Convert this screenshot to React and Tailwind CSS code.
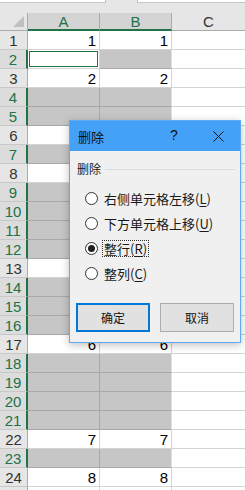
import React from "react";

const SEL = new Set([2, 4, 5, 7, 9, 10, 11, 12, 14, 15, 16, 18, 19, 20, 21, 23]);
const VALS = { 1: 1, 3: 2, 17: 6, 22: 7, 24: 8 };

function Row({ n }) {
  const sel = SEL.has(n);
  const active = n === 2;
  const v = VALS[n];
  const label = n <= 24 ? n : "";
  return (
    <div className="flex h-[19px] shrink-0">
      <div
        className={
          "w-[28px] shrink-0 flex items-center justify-center border-b border-[#c8c8c8] text-[15px] leading-none " +
          (sel
            ? "bg-[#dcdcdc] text-[#217346] border-r-2 border-r-[#217346]"
            : "bg-[#e6e6e6] text-[#333] border-r border-r-[#ababab]")
        }
      >
        {label}
      </div>
      {active ? (
        <div className="w-[72px] shrink-0 border-r border-b border-[#d4d4d4] bg-white p-[1px]">
          <div className="h-full w-full border border-[#217346]"></div>
        </div>
      ) : (
        <div
          className={
            "w-[72px] shrink-0 flex items-center justify-end pr-[3px] border-r border-b text-[15px] leading-none text-black " +
            (sel ? "bg-[#c6c6c6] border-[#a8a8a8]" : "bg-white border-[#d4d4d4]")
          }
        >
          {v}
        </div>
      )}
      <div
        className={
          "w-[72px] shrink-0 flex items-center justify-end pr-[3px] border-r border-b text-[15px] leading-none text-black " +
          (sel ? "bg-[#c6c6c6] border-[#a8a8a8] border-r-[#e0e0e0]" : "bg-white border-[#d4d4d4]")
        }
      >
        {v}
      </div>
      <div className="flex-1 bg-white border-b border-[#d4d4d4]"></div>
    </div>
  );
}

function Radio({ checked }) {
  return (
    <div className="w-[13px] h-[13px] rounded-full border border-[#333] bg-white flex items-center justify-center shrink-0">
      {checked && <div className="w-[7px] h-[7px] rounded-full bg-[#222]"></div>}
    </div>
  );
}

function Option({ label, k, checked }) {
  return (
    <div className="h-[25px] flex items-center pl-[15px] gap-[4px]">
      <Radio checked={checked} />
      <span
        className={
          "text-[13px] leading-none text-[#1a1a1a] px-[1px] py-[1px] " +
          (checked ? "border border-dotted border-[#333]" : "border border-transparent")
        }
      >
        {label}(<span className="underline underline-offset-2">{k}</span>)
      </span>
    </div>
  );
}

export default function App() {
  const rows = Array.from({ length: 25 }, (_, i) => i + 1);
  return (
    <div
      className="relative w-[245px] h-[490px] overflow-hidden bg-white flex flex-col"
      style={{ fontFamily: '"Liberation Sans", "Noto Sans CJK SC", sans-serif' }}
    >
      {/* formula bar remnant */}
      <div className="h-[13px] shrink-0 bg-[#e6e6e6] flex items-start">
        <div className="w-[106px] h-[3px] bg-white border-b border-r border-[#c6c6c6]"></div>
        <div className="flex-1"></div>
        <div className="w-[108px] h-[3px] bg-white border-b border-l border-[#c6c6c6]"></div>
      </div>
      {/* column headers */}
      <div className="flex h-[18px] shrink-0">
        <div className="w-[28px] shrink-0 bg-[#e6e6e6] border-r border-b border-[#ababab] relative">
          <div className="absolute right-[3px] bottom-[3px] w-0 h-0 border-l-[11px] border-l-transparent border-b-[11px] border-b-[#c0c0c0]"></div>
        </div>
        <div className="w-[72px] shrink-0 bg-[#d4d4d4] border-r border-[#ababab] border-b-2 border-b-[#217346] flex items-center justify-center text-[15px] leading-none text-[#217346]">
          A
        </div>
        <div className="w-[72px] shrink-0 bg-[#d4d4d4] border-r border-[#ababab] border-b-2 border-b-[#217346] flex items-center justify-center text-[15px] leading-none text-[#217346]">
          B
        </div>
        <div className="flex-1 bg-[#e6e6e6] border-b border-[#ababab] flex items-center justify-center text-[15px] leading-none text-[#333]">
          C
        </div>
      </div>
      {rows.map((n) => (
        <Row key={n} n={n} />
      ))}

      {/* dialog */}
      <div
        className="absolute left-[69px] top-[120px] w-[172px] h-[223px] border border-[#5fa9f0] bg-[#f0f0f0] shadow-[0_2px_8px_rgba(0,0,0,0.25)] flex flex-col"
        style={{ fontFamily: '"Noto Sans CJK SC", "Liberation Sans", sans-serif' }}
      >
        <div className="h-[30px] shrink-0 bg-[#45a0f7] flex items-center pl-[8px] relative">
          <span className="text-[13px] leading-none text-[#111]">删除</span>
          <span className="absolute left-[100px] top-[7px] text-[14px] leading-none text-[#111]" style={{ fontFamily: '"Liberation Sans", sans-serif' }}>?</span>
          <svg className="absolute left-[143px] top-[10px]" width="11" height="11" viewBox="0 0 11 11">
            <path d="M0.5 0.5 L10.5 10.5 M10.5 0.5 L0.5 10.5" stroke="#111" strokeWidth="1" fill="none" />
          </svg>
        </div>
        <div className="flex flex-col pt-[11px]">
          <div className="h-[14px] flex items-center pl-[7px] pr-[5px] gap-[4px]">
            <span className="text-[12px] leading-none text-[#1a1a1a]">删除</span>
            <div className="flex-1 h-px bg-[#d8dde2]"></div>
          </div>
          <div className="mt-[10px] flex flex-col">
            <Option label="右侧单元格左移" k="L" />
            <Option label="下方单元格上移" k="U" />
            <Option label="整行" k="R" checked />
            <Option label="整列" k="C" />
          </div>
          <div className="mt-[17px] flex gap-[10px] pl-[6px]">
            <div className="w-[74px] h-[29px] bg-[#e1e1e1] border-2 border-[#0078d7] flex items-center justify-center text-[12px] text-[#111]">
              确定
            </div>
            <div className="w-[74px] h-[29px] bg-[#e1e1e1] border border-[#adadad] flex items-center justify-center text-[12px] text-[#111]">
              取消
            </div>
          </div>
        </div>
      </div>
    </div>
  );
}
